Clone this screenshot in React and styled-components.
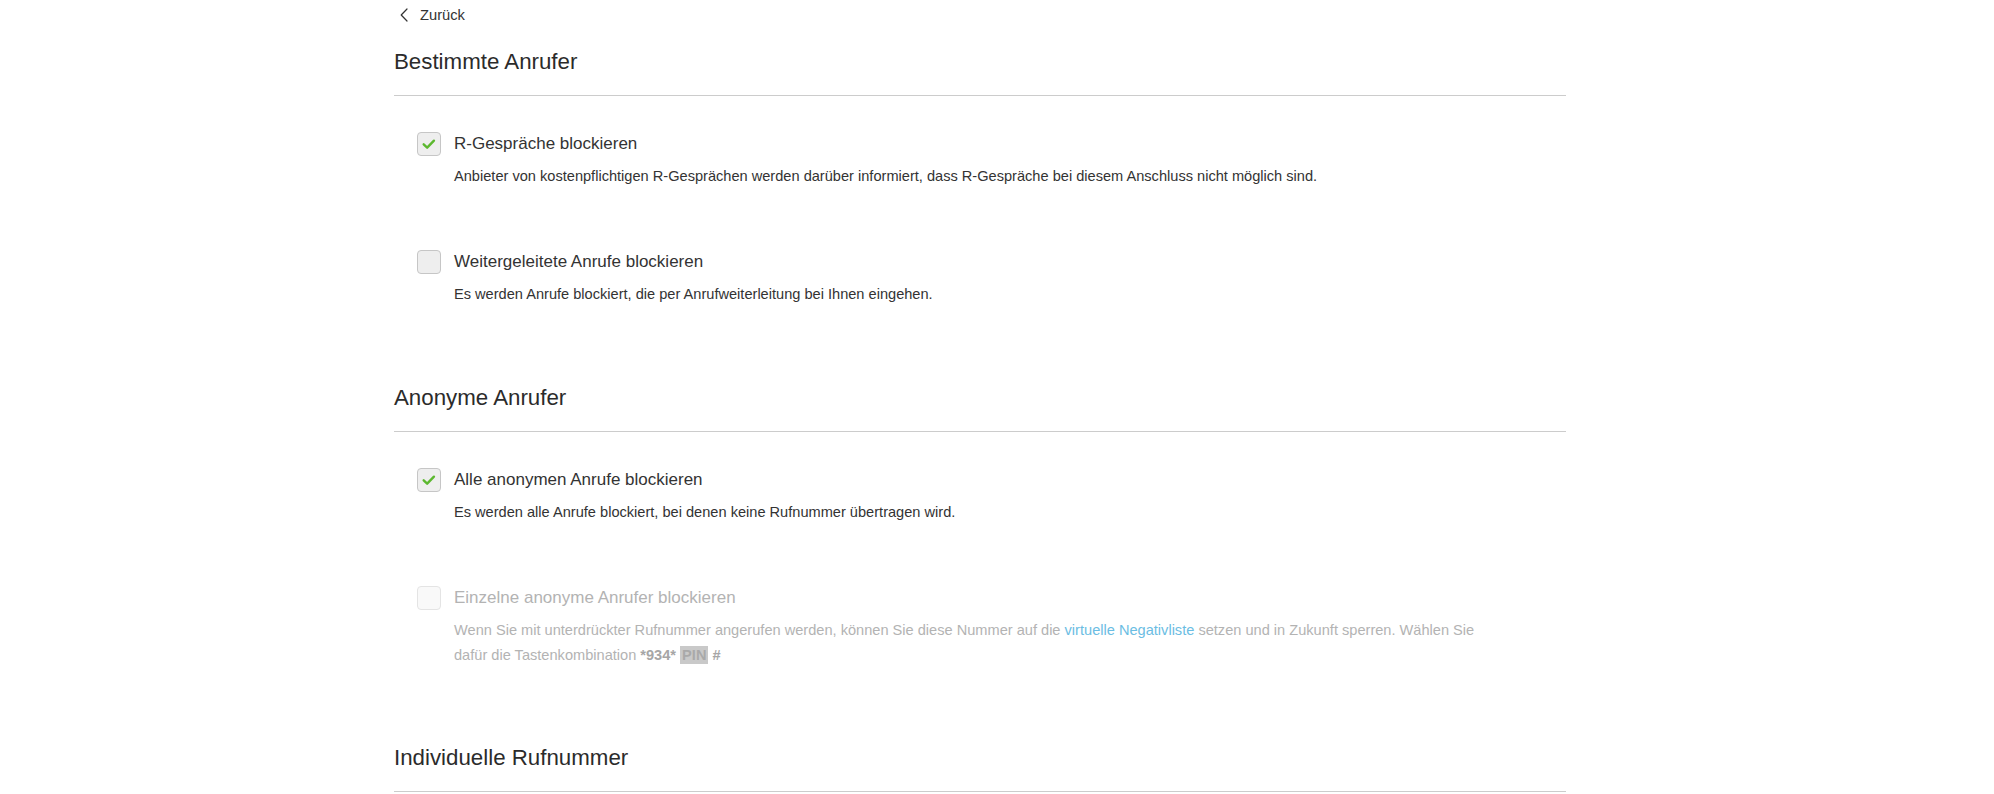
import React from 'react'
import styled, { createGlobalStyle } from 'styled-components'

const GlobalStyle = createGlobalStyle`
    html, body {
        margin: 0;
        padding: 0;
        background: #ffffff;
    }
    body {
        font-family: 'Liberation Sans', Arial, sans-serif;
        color: #333333;
        -webkit-font-smoothing: antialiased;
    }
`

const Page = styled.main`
    width: 1172px;
    margin-left: 394px;
`

const BackLink = styled.a`
    display: flex;
    align-items: center;
    gap: 12px;
    height: 28px;
    padding-top: 1px;
    padding-left: 6px;
    font-size: 14.7px;
    line-height: 28px;
    color: #333333;
    text-decoration: none;
    cursor: pointer;

    svg {
        display: block;
        margin-top: -1px;
    }
`

const Section = styled.section`
    margin-top: ${p => p.first ? '16px' : '0'};
    margin-bottom: ${p => p.gapAfter || 0}px;
`

const Title = styled.h2`
    margin: 0;
    padding-bottom: 16px;
    border-bottom: 1px solid #cccccc;
    font-size: 22.3px;
    font-weight: 400;
    line-height: 34px;
    color: #2b2b2b;
`

const OptionList = styled.div`
    display: flex;
    flex-direction: column;
    gap: 61px;
    padding-top: 36px;
`

const Option = styled.label`
    display: grid;
    grid-template-columns: 24px 1fr;
    column-gap: 13px;
    padding-left: 23px;
    color: ${p => p.disabled ? '#b3b3b3' : '#333333'};
    cursor: ${p => p.disabled ? 'default' : 'pointer'};
`

const Box = styled.span`
    box-sizing: border-box;
    width: 24px;
    height: 24px;
    border-radius: 4px;
    border: 1px solid ${p => p.disabled ? '#e4e4e4' : '#c6c6c6'};
    background: ${p => p.disabled ? '#f9f9f9' : '#eeeeee'};
    display: flex;
    align-items: center;
    justify-content: center;
`

const Label = styled.span`
    font-size: 17px;
    line-height: 24px;
`

const Description = styled.p`
    grid-column: 2;
    margin: 8px 0 0;
    font-size: 14.6px;
    line-height: 25px;
`

const InlineLink = styled.a`
    color: #6bbde3;
    text-decoration: none;
`

const Code = styled.b`
    font-weight: 700;
    color: #a6a6a6;
`

const Pin = styled.span`
    padding: 1px 2px;
    background: #c9c9c9;
    color: #a9a9a9;
    font-weight: 700;
`

function Chevron() {
    return (
        <svg width="8" height="14" viewBox="0 0 8 14" fill="none">
            <path d="M7 1 L1.2 7 L7 13" stroke="#333" strokeWidth="1.2" strokeLinecap="round" strokeLinejoin="round" />
        </svg>
    )
}

function CheckBox({ checked, disabled }) {
    return (
        <Box disabled={disabled}>
            {checked && (
                <svg width="24" height="24" viewBox="0 0 24 24" fill="none">
                    <path d="M6.2 12.4 L10 16 L17.4 8.4" stroke="#5cb82f" strokeWidth="2.6" strokeLinecap="round" strokeLinejoin="round" />
                </svg>
            )}
        </Box>
    )
}

function Setting({ checked, disabled, label, children }) {
    return (
        <Option disabled={disabled}>
            <CheckBox checked={checked} disabled={disabled} />
            <Label>{label}</Label>
            <Description>{children}</Description>
        </Option>
    )
}

export default function App() {
    return (
        <>
            <GlobalStyle />
            <Page>
                <BackLink>
                    <Chevron />
                    Zurück
                </BackLink>

                <Section first gapAfter={74}>
                    <Title>Bestimmte Anrufer</Title>
                    <OptionList>
                        <Setting checked label="R-Gespräche blockieren">
                            Anbieter von kostenpflichtigen R-Gesprächen werden darüber informiert, dass R-Gespräche bei diesem Anschluss nicht möglich sind.
                        </Setting>
                        <Setting label="Weitergeleitete Anrufe blockieren">
                            Es werden Anrufe blockiert, die per Anrufweiterleitung bei Ihnen eingehen.
                        </Setting>
                    </OptionList>
                </Section>

                <Section gapAfter={73}>
                    <Title>Anonyme Anrufer</Title>
                    <OptionList>
                        <Setting checked label="Alle anonymen Anrufe blockieren">
                            Es werden alle Anrufe blockiert, bei denen keine Rufnummer übertragen wird.
                        </Setting>
                        <Setting disabled label="Einzelne anonyme Anrufer blockieren">
                            Wenn Sie mit unterdrückter Rufnummer angerufen werden, können Sie diese Nummer auf die{' '}
                            <InlineLink>virtuelle Negativliste</InlineLink> setzen und in Zukunft sperren. Wählen Sie
                            <br />
                            dafür die Tastenkombination <Code>*934*</Code> <Pin>PIN</Pin> <Code>#</Code>
                        </Setting>
                    </OptionList>
                </Section>

                <Section>
                    <Title>Individuelle Rufnummer</Title>
                </Section>
            </Page>
        </>
    )
}
